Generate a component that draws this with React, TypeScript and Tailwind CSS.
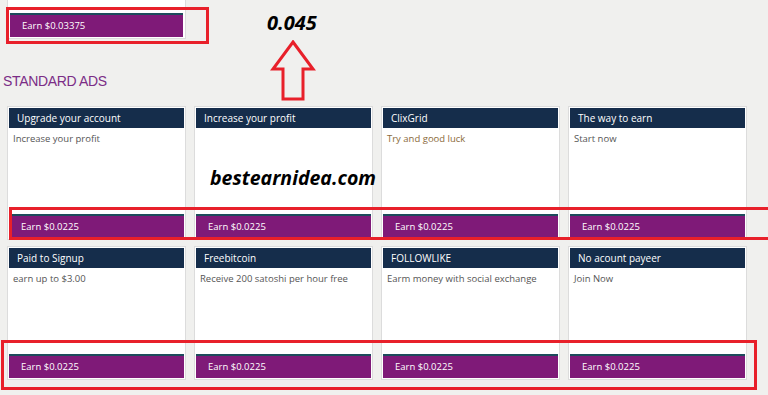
import React from 'react';

interface Ad {
  title: string;
  desc: string;
  descClass?: string;
}

const ads: Ad[] = [
  { title: 'Upgrade your account', desc: 'Increase your profit' },
  { title: 'Increase your profit', desc: '' },
  { title: 'ClixGrid', desc: 'Try and good luck', descClass: 'text-[#8a6a3a]' },
  { title: 'The way to earn', desc: 'Start now' },
  { title: 'Paid to Signup', desc: 'earn up to $3.00' },
  { title: 'Freebitcoin', desc: 'Receive 200 satoshi per hour free' },
  { title: 'FOLLOWLIKE', desc: 'Earm money with social exchange' },
  { title: 'No acount payeer', desc: 'Join Now' },
];

function EarnBar({ amount }: { amount: string }) {
  return (
    <div className="border-t-2 border-[#1d4b5c] bg-[#7f1a78] h-6 flex items-center pl-3 text-[9.5px] text-white">
      Earn ${amount}
    </div>
  );
}

function AdCard({ ad }: { ad: Ad }) {
  return (
    <div className="bg-white border border-[#dcdcdc] p-px flex flex-col h-[134px]">
      <div className="bg-[#152d4b] h-5 flex items-center pl-2 text-[10px] text-white">{ad.title}</div>
      <div className={`flex-1 px-1 pt-[5px] text-[9.5px] leading-tight ${ad.descClass ?? 'text-[#555]'}`}>{ad.desc}</div>
      <EarnBar amount="0.0225" />
    </div>
  );
}

export default function App() {
  return (
    <div
      className="relative w-[768px] h-[395px] overflow-hidden bg-[#f0f0ee]"
      style={{ fontFamily: '"Open Sans", "DejaVu Sans", sans-serif' }}
    >
      {/* bottom of the previous card */}
      <div className="ml-[7px] w-[179px] h-[39px] bg-white border-b border-x border-[#dcdcdc] flex flex-col justify-end pb-[1px] px-[2px]">
        <EarnBar amount="0.03375" />
      </div>

      <div
        className="pl-[3px] mt-[32px] h-[35px] text-[14px] text-[#7b2d86] tracking-tight"
        style={{ fontFamily: '"Liberation Sans", Arial, sans-serif' }}
      >
        STANDARD ADS
      </div>

      <div className="ml-[7px] w-[740px] grid grid-cols-4 gap-x-2 gap-y-[6px]">
        {ads.map((ad) => (
          <AdCard key={ad.title} ad={ad} />
        ))}
      </div>

      {/* annotations drawn over the screenshot */}
      <div className="absolute left-[6px] top-[7px] w-[203px] h-[37px] border-[3px] border-[#e8202a]" />
      <div className="absolute left-[9px] top-[207px] w-[770px] h-[33px] border-[3px] border-[#e8202a]" />
      <div className="absolute left-[1px] top-[340px] w-[756px] h-[50px] border-[3px] border-[#e8202a]" />

      <div className="absolute left-[267px] top-[8px] text-[20px] font-bold italic text-black" style={{ fontFamily: '"Open Sans", sans-serif' }}>
        0.045
      </div>
      <svg className="absolute left-[270px] top-[40px]" width="46" height="62" viewBox="0 0 46 62">
        <path d="M23 2 L43 29 L33 29 L33 59 L13 59 L13 29 L3 29 Z" fill="none" stroke="#e8202a" strokeWidth="3" strokeLinejoin="miter" />
      </svg>
      <div className="absolute left-[210px] top-[163px] text-[19.5px] font-bold italic text-black" style={{ fontFamily: '"Open Sans", sans-serif' }}>
        bestearnidea.com
      </div>
    </div>
  );
}
